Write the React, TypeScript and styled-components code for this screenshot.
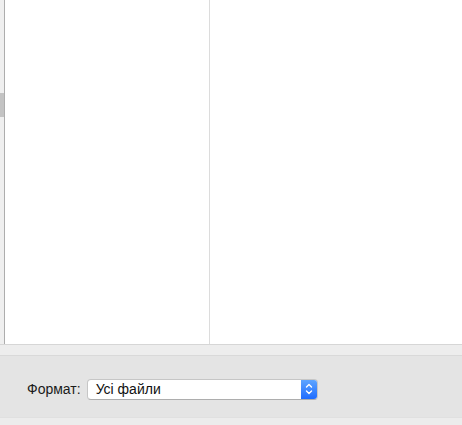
import React from "react";
import styled, { createGlobalStyle } from "styled-components";

const Global = createGlobalStyle`
  html, body { margin: 0; padding: 0; background: #e4e4e4; }
  body { font-family: "Liberation Sans", Arial, sans-serif; }
`;

const Window = styled.div`
  width: 462px;
  height: 425px;
  display: flex;
  flex-direction: column;
  overflow: hidden;
`;

const Browser = styled.div`
  height: 344px;
  display: flex;
  background: #fff;
  border-bottom: 1px solid #d6d6d6;
`;

const Track = styled.div`
  width: 4px;
  background: #efefef;
  border-right: 1px solid #adadad;
  display: flex;
  flex-direction: column;
`;

const Thumb = styled.div`
  margin-top: 93px;
  height: 24px;
  background: #c3c3c3;
`;

const Column = styled.div<{ $w?: number }>`
  ${(p) => (p.$w ? `width: ${p.$w}px; flex: none;` : `flex: 1;`)}
  background: #fff;
  border-right: ${(p) => (p.$w ? "1px solid #dcdcdc" : "none")};
`;

const Band = styled.div`
  height: 10px;
  background: #ededed;
  border-bottom: 1px solid #d9d9d9;
`;

const Panel = styled.div`
  flex: 1;
  display: flex;
  align-items: center;
  padding-left: 27px;
  gap: 6px;
  background: #e4e4e4;
`;

const Label = styled.span`
  font-size: 14px;
  color: #1a1a1a;
  margin-top: 5px;
`;

const Popup = styled.div`
  margin-top: 5px;
  width: 231px;
  height: 21px;
  box-sizing: border-box;
  display: flex;
  background: #fff;
  border: 1px solid #c6c6c6;
  border-bottom-color: #adadad;
  border-radius: 4px;
  overflow: hidden;
`;

const PopupText = styled.span`
  flex: 1;
  padding-left: 8px;
  font-size: 14px;
  line-height: 19px;
  color: #111;
`;

const Stepper = styled.div`
  width: 16px;
  background: linear-gradient(#5ea5ff, #1e6cff);
  display: flex;
  align-items: center;
  justify-content: center;
`;

const Footer = styled.div`
  height: 7px;
  background: #ececec;
  border-top: 1px solid #e0e0e0;
`;

export default function App() {
  return (
    <Window>
      <Global />
      <Browser>
        <Track>
          <Thumb />
        </Track>
        <Column $w={204} />
        <Column />
      </Browser>
      <Band />
      <Panel>
        <Label>Формат:</Label>
        <Popup>
          <PopupText>Усі файли</PopupText>
          <Stepper>
            <svg width="8" height="12" viewBox="0 0 8 12" fill="none" stroke="#fff" strokeWidth="1.4" strokeLinecap="round" strokeLinejoin="round">
              <path d="M1.5 4 L4 1.5 L6.5 4" />
              <path d="M1.5 8 L4 10.5 L6.5 8" />
            </svg>
          </Stepper>
        </Popup>
      </Panel>
      <Footer />
    </Window>
  );
}
